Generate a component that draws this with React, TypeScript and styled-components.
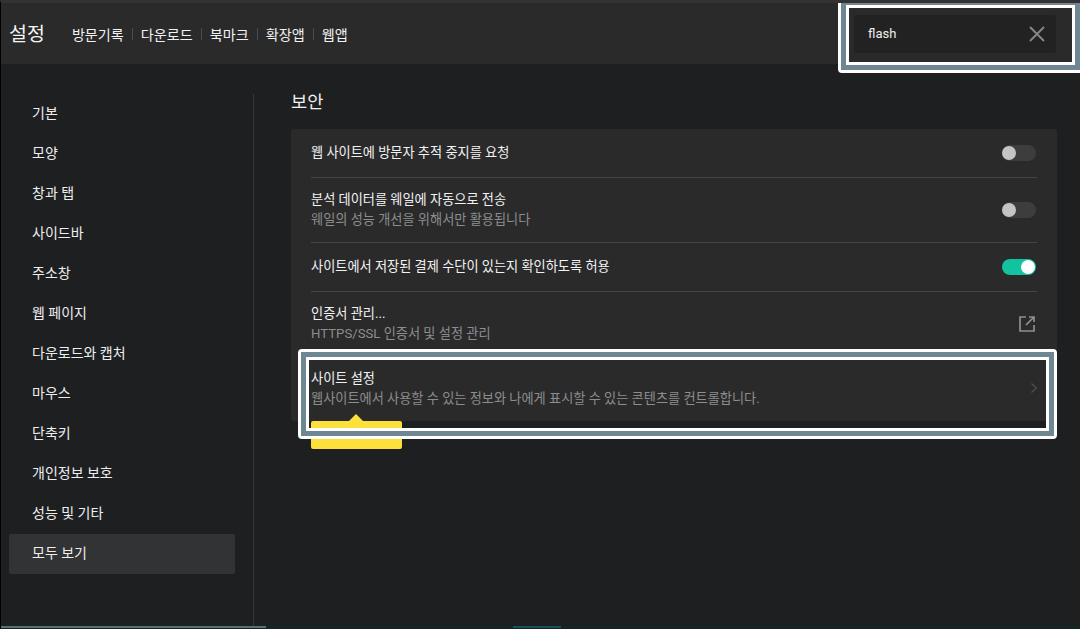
import React from "react";
import styled, { createGlobalStyle } from "styled-components";

const Global = createGlobalStyle`
  html, body { margin: 0; padding: 0; background: #1e1f21; }
  body { font-family: Roboto, "Noto Sans CJK KR", sans-serif; overflow: hidden; }
  * { box-sizing: border-box; }
`;

const Frame = styled.div`
  position: relative;
  width: 1080px;
  height: 629px;
  display: flex;
  flex-direction: column;
  background: #1e1f21;
  border-top: 3px solid #333;
  border-left: 1px solid #000;
  overflow: hidden;
`;

const Header = styled.header`
  height: 61px;
  flex: none;
  display: flex;
  align-items: center;
  padding-left: 8px;
  background: #2a2a2b;
`;

const Title = styled.h1`
  margin: 0 19px 0 0;
  font-size: 19.5px;
  font-weight: 400;
  color: #f5f5f5;
  position: relative;
  top: -1px;
`;

const NavItem = styled.a`
  font-size: 14.12px;
  color: #f2f2f2;
  padding: 0 8px;
  height: 12px;
  display: flex;
  align-items: center;
  & + & { border-left: 1px solid #4c4c4c; }
`;

const Body = styled.div`
  flex: 1;
  display: flex;
  min-height: 0;
`;

const Sidebar = styled.nav`
  width: 252px;
  flex: none;
  padding: 30px 18px 0 8px;
  display: flex;
  flex-direction: column;
  height: 100%;
`;

const SideItem = styled.div<{ $active?: boolean }>`
  height: 40px;
  flex: none;
  display: flex;
  align-items: center;
  padding: 0 0 5px 23px;
  font-size: 14px;
  color: #eeeeee;
  border-radius: 2px;
  background: ${(p) => (p.$active ? "#323334" : "transparent")};
`;

const Main = styled.main`
  flex: 1;
  min-width: 0;
  margin-top: 30px;
  margin-bottom: 3px;
  border-left: 1px solid #333436;
  padding-left: 37px;
  padding-right: 23px;
`;

const SectionTitle = styled.h2`
  margin: 0 0 18px;
  font-size: 17.6px;
  line-height: 17px;
  font-weight: 400;
  color: #f0f0f0;
`;

const Card = styled.section`
  background: #2a2a2b;
  border-radius: 3px;
  display: flex;
  flex-direction: column;
  position: relative;
`;

const Row = styled.div<{ $h: number; $last?: boolean }>`
  height: ${(p) => p.$h}px;
  margin: 0 20px;
  display: flex;
  align-items: center;
  justify-content: space-between;
  border-bottom: ${(p) => (p.$last ? "none" : "1px solid #454546")};
`;

const RowText = styled.div`
  display: flex;
  flex-direction: column;
  gap: 3px;
`;

const RowTitle = styled.div`
  font-size: 13.2px;
  line-height: 17px;
  margin-top: -2px;
  color: #f2f2f2;
`;

const RowSub = styled.div`
  font-size: 13.2px;
  line-height: 17px;
  color: #8c8d8e;
`;

const Toggle = styled.div<{ $on?: boolean }>`
  width: 34px;
  height: 16px;
  border-radius: 8px;
  position: relative;
  flex: none;
  margin-right: 1px;
  background: ${(p) => (p.$on ? "#12c2a0" : "#3d3d3e")};
  &::after {
    content: "";
    position: absolute;
    top: 1px;
    width: 14px;
    height: 14px;
    border-radius: 50%;
    left: ${(p) => (p.$on ? "19px" : "0")};
    background: ${(p) => (p.$on ? "#ffffff" : "#c4c4c4")};
  }
`;

const ExternalIcon = styled.svg`
  flex: none;
  margin-right: 2px;
`;

const ChevronIcon = styled.svg`
  flex: none;
  margin: -2px 0 0;
`;

const Tooltip = styled.div`
  position: absolute;
  left: 20px;
  top: 292px;
  width: 91px;
  height: 28px;
  background: #fce13d;
  border-radius: 2px;
  color: #222;
  font-size: 11px;
  letter-spacing: 1.8px;
  line-height: 28px;
  text-align: center;
  &::before {
    content: "";
    position: absolute;
    left: 38px;
    top: -7px;
    border-left: 7px solid transparent;
    border-right: 7px solid transparent;
    border-bottom: 7px solid #fce13d;
  }
`;

const SearchArea = styled.div`
  margin-left: auto;
  margin-right: 24px;
  width: 202px;
  height: 38px;
  display: flex;
  align-items: center;
  justify-content: space-between;
  padding: 0 11px 0 14px;
  background: #222223;
  border-radius: 2px;
  font-size: 13px;
  color: #eee;
`;

const Highlight = styled.div<{ $x: number; $y: number; $w: number; $h: number }>`
  position: absolute;
  left: ${(p) => p.$x}px;
  top: ${(p) => p.$y}px;
  width: ${(p) => p.$w}px;
  height: ${(p) => p.$h}px;
  border: 3px solid #fff;
  border-radius: 4px;
  pointer-events: none;
  z-index: 2;
  &::after {
    content: "";
    position: absolute;
    inset: 0;
    border: 5px solid #6e8792;
    outline: 3px solid #fff;
    outline-offset: -8px;
  }
`;

const ScrollTrack = styled.div`
  position: absolute;
  left: 0;
  right: 0;
  bottom: 1px;
  height: 2px;
  background: #12262b;
`;

const ScrollThumb = styled.div<{ $x: number; $w: number; $c: string }>`
  position: absolute;
  top: 0;
  height: 2px;
  left: ${(p) => p.$x}px;
  width: ${(p) => p.$w}px;
  background: ${(p) => p.$c};
`;

const items = ["기본", "모양", "창과 탭", "사이드바", "주소창", "웹 페이지", "다운로드와 캡처", "마우스", "단축키", "개인정보 보호", "성능 및 기타", "모두 보기"];
const nav = ["방문기록", "다운로드", "북마크", "확장앱", "웹앱"];

export default function App() {
  return (
    <Frame>
      <Global />
      <Header>
        <Title>설정</Title>
        {nav.map((n) => (
          <NavItem key={n}>{n}</NavItem>
        ))}
        <SearchArea>
          <span>flash</span>
          <svg width="16" height="16" viewBox="0 0 16 16" fill="none" stroke="#858585" strokeWidth="2">
            <path d="M1 1l14 14M15 1L1 15" />
          </svg>
        </SearchArea>
      </Header>
      <Body>
        <Sidebar>
          {items.map((t, i) => (
            <SideItem key={t} $active={i === items.length - 1}>{t}</SideItem>
          ))}
        </Sidebar>
        <Main>
          <SectionTitle>보안</SectionTitle>
          <Card>
            <Row $h={49}>
              <RowTitle>웹 사이트에 방문자 추적 중지를 요청</RowTitle>
              <Toggle />
            </Row>
            <Row $h={65}>
              <RowText>
                <RowTitle>분석 데이터를 웨일에 자동으로 전송</RowTitle>
                <RowSub>웨일의 성능 개선을 위해서만 활용됩니다</RowSub>
              </RowText>
              <Toggle />
            </Row>
            <Row $h={49}>
              <RowTitle>사이트에서 저장된 결제 수단이 있는지 확인하도록 허용</RowTitle>
              <Toggle $on />
            </Row>
            <Row $h={65}>
              <RowText>
                <RowTitle>인증서 관리...</RowTitle>
                <RowSub>HTTPS/SSL 인증서 및 설정 관리</RowSub>
              </RowText>
              <ExternalIcon width="16" height="16" viewBox="0 0 16 16" fill="none" stroke="#8f8f8f" strokeWidth="1.7">
                <path d="M7 1H1v14h14V9M10 1h5v5M15 1L7 9" />
              </ExternalIcon>
            </Row>
            <Row $h={64} $last>
              <RowText>
                <RowTitle>사이트 설정</RowTitle>
                <RowSub>웹사이트에서 사용할 수 있는 정보와 나에게 표시할 수 있는 콘텐츠를 컨트롤합니다.</RowSub>
              </RowText>
              <ChevronIcon width="6" height="10" viewBox="0 0 6 10" fill="none" stroke="#505050" strokeWidth="1.2">
                <path d="M0.5 0.5l5 4.5-5 4.5" />
              </ChevronIcon>
            </Row>
            <Tooltip>콘텐츠 설정</Tooltip>
          </Card>
        </Main>
      </Body>
      <ScrollTrack>
        <ScrollThumb $x={0} $w={265} $c="#557079" />
        <ScrollThumb $x={512} $w={48} $c="#14525c" />
      </ScrollTrack>
      <Highlight $x={297} $y={346} $w={759} $h={90} />
      <Highlight $x={837} $y={-6} $w={245} $h={76} />
    </Frame>
  );
}
